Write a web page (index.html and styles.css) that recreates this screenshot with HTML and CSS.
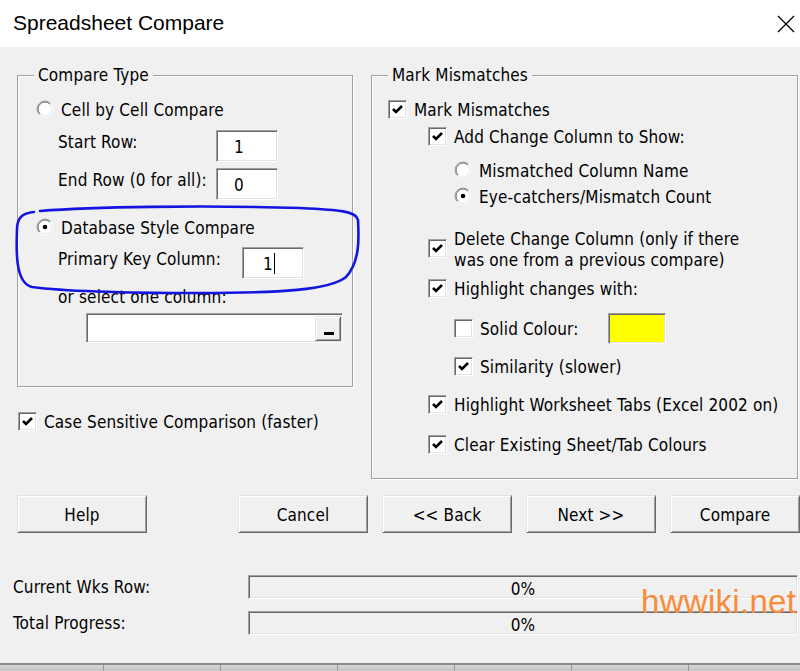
FILE: index.html
```html
<!DOCTYPE html>
<html>
<head>
<meta charset="utf-8">
<link rel="stylesheet" href="styles.css">
</head>
<body>
<div class="window">
  <div class="titlebar">
    <span class="title">Spreadsheet Compare</span>
    <svg class="close" viewBox="0 0 18 18"><path d="M1 1L17 17M17 1L1 17"/></svg>
  </div>

  <div class="top">
    <div class="leftcol">
      <div class="group gl">
        <span class="legend">Compare Type</span>
        <div class="row l-r1">
          <svg class="radio" viewBox="0 0 18 18"><circle cx="9" cy="9" r="8" fill="#fff"/><path d="M3.34 14.66A8 8 0 0 1 14.66 3.34" class="o1"/><path d="M14.66 3.34A8 8 0 0 1 3.34 14.66" class="o2"/><path d="M4.05 13.95A7 7 0 0 1 13.95 4.05" class="i1"/><path d="M13.95 4.05A7 7 0 0 1 4.05 13.95" class="i2"/></svg>
          <span>Cell by Cell Compare</span>
        </div>
        <div class="frow l-r2"><span class="flabel w158">Start Row:</span><span class="tbox sunken">1</span></div>
        <div class="frow l-r3"><span class="flabel w158">End Row (0 for all):</span><span class="tbox sunken">0</span></div>
        <div class="row l-r4">
          <svg class="radio" viewBox="0 0 18 18"><circle cx="9" cy="9" r="8" fill="#fff"/><path d="M3.34 14.66A8 8 0 0 1 14.66 3.34" class="o1"/><path d="M14.66 3.34A8 8 0 0 1 3.34 14.66" class="o2"/><path d="M4.05 13.95A7 7 0 0 1 13.95 4.05" class="i1"/><path d="M13.95 4.05A7 7 0 0 1 4.05 13.95" class="i2"/><circle cx="9" cy="9" r="2.3" fill="#000"/></svg>
          <span>Database Style Compare</span>
        </div>
        <div class="frow l-r5"><span class="flabel w184">Primary Key Column:</span><span class="tbox sunken pk">1<span class="caret"></span></span></div>
        <div class="plain l-r6">or select one column:</div>
        <div class="combo sunken l-r7"><span class="cbtn"><span class="dash"></span></span></div>
      </div>
      <div class="row case">
        <span class="cb sunken"><svg viewBox="0 0 15 15"><path d="M3 7L6 10L12 4"/></svg></span>
        <span>Case Sensitive Comparison (faster)</span>
      </div>
    </div>

    <div class="group gr">
      <span class="legend">Mark Mismatches</span>
      <div class="row r1 in0">
        <span class="cb sunken"><svg viewBox="0 0 15 15"><path d="M3 7L6 10L12 4"/></svg></span>
        <span>Mark Mismatches</span>
      </div>
      <div class="row r2 in1">
        <span class="cb sunken"><svg viewBox="0 0 15 15"><path d="M3 7L6 10L12 4"/></svg></span>
        <span>Add Change Column to Show:</span>
      </div>
      <div class="row r3 in2">
        <svg class="radio" viewBox="0 0 18 18"><circle cx="9" cy="9" r="8" fill="#fff"/><path d="M3.34 14.66A8 8 0 0 1 14.66 3.34" class="o1"/><path d="M14.66 3.34A8 8 0 0 1 3.34 14.66" class="o2"/><path d="M4.05 13.95A7 7 0 0 1 13.95 4.05" class="i1"/><path d="M13.95 4.05A7 7 0 0 1 4.05 13.95" class="i2"/></svg>
        <span>Mismatched Column Name</span>
      </div>
      <div class="row r4 in2">
        <svg class="radio" viewBox="0 0 18 18"><circle cx="9" cy="9" r="8" fill="#fff"/><path d="M3.34 14.66A8 8 0 0 1 14.66 3.34" class="o1"/><path d="M14.66 3.34A8 8 0 0 1 3.34 14.66" class="o2"/><path d="M4.05 13.95A7 7 0 0 1 13.95 4.05" class="i1"/><path d="M13.95 4.05A7 7 0 0 1 4.05 13.95" class="i2"/><circle cx="9" cy="9" r="2.3" fill="#000"/></svg>
        <span>Eye-catchers/Mismatch Count</span>
      </div>
      <div class="row r5 in1">
        <span class="cb sunken"><svg viewBox="0 0 15 15"><path d="M3 7L6 10L12 4"/></svg></span>
        <span class="two">Delete Change Column (only if there<br>was one from a previous compare)</span>
      </div>
      <div class="row r6 in1">
        <span class="cb sunken"><svg viewBox="0 0 15 15"><path d="M3 7L6 10L12 4"/></svg></span>
        <span>Highlight changes with:</span>
      </div>
      <div class="row r7 in2">
        <span class="cb sunken"></span>
        <span class="solid">Solid Colour:</span>
        <span class="swatch sunken"></span>
      </div>
      <div class="row r8 in2">
        <span class="cb sunken"><svg viewBox="0 0 15 15"><path d="M3 7L6 10L12 4"/></svg></span>
        <span>Similarity (slower)</span>
      </div>
      <div class="row r9 in1">
        <span class="cb sunken"><svg viewBox="0 0 15 15"><path d="M3 7L6 10L12 4"/></svg></span>
        <span>Highlight Worksheet Tabs (Excel 2002 on)</span>
      </div>
      <div class="row r10 in1">
        <span class="cb sunken"><svg viewBox="0 0 15 15"><path d="M3 7L6 10L12 4"/></svg></span>
        <span>Clear Existing Sheet/Tab Colours</span>
      </div>
    </div>
  </div>

  <div class="buttons">
    <div class="btn">Help</div>
    <div class="btn cancel">Cancel</div>
    <div class="btn">&lt;&lt; Back</div>
    <div class="btn">Next &gt;&gt;</div>
    <div class="btn">Compare</div>
  </div>

  <div class="progress">
    <div class="prow"><span class="plabel">Current Wks Row:</span><div class="pbar">0%</div></div>
    <div class="prow second"><span class="plabel">Total Progress:</span><div class="pbar">0%</div></div>
  </div>

  <div class="strip">
    <span class="cell c0"></span><span class="cell"></span><span class="cell"></span><span class="cell"></span><span class="cell"></span><span class="cell"></span><span class="cell last"></span>
  </div>

  <svg class="annot" viewBox="0 0 800 671"><path d="M40 211C90 207 200 205 300 208C340 210 356 211 358 220C359 238 360 262 346 277C330 290 280 293 200 293C130 293 70 292 32 287C16 283 16 255 17 230C17 218 22 213 34 212"/></svg>
  <div class="watermark">hwwiki.net</div>
</div>
</body>
</html>
```

FILE: styles.css
```css
* { box-sizing: border-box; }
html, body { margin: 0; padding: 0; }
body {
  width: 800px;
  height: 671px;
  overflow: hidden;
  background: #f0f0f0;
  font-family: "DejaVu Sans Condensed", "Liberation Sans", Arial, sans-serif;
  font-stretch: condensed;
  font-size: 17px;
  letter-spacing: 0.15px;
  line-height: 20px;
  color: #000;
}
.window {
  position: relative;
  width: 800px;
  height: 671px;
  display: flex;
  flex-direction: column;
}
.titlebar {
  height: 47px;
  background: #fff;
  display: flex;
  align-items: center;
  justify-content: space-between;
  padding: 0 5px 1px 13px;
  flex: none;
}
.title { font-family: "Liberation Sans", Arial, sans-serif; font-stretch: normal; letter-spacing: 0; font-size: 21px; color: #000; }
.close { width: 18px; height: 18px; margin-top: 1px; }
.close path { stroke: #000; stroke-width: 1.3; fill: none; }

.top {
  display: flex;
  margin-top: 28px;
  padding-left: 17px;
  align-items: flex-start;
}
.leftcol { width: 337px; flex: none; }
.group {
  position: relative;
  border: 1px solid #a0a0a0;
  box-shadow: inset 1px 1px 0 #fff, 1px 1px 0 #fff;
}
.gl { height: 312px; width: 336px; padding-left: 18px; }
.gr { height: 404px; width: 427px; margin-left: 17px; padding-left: 16px; }
.legend {
  position: absolute;
  top: -11px;
  left: 16px;
  padding: 0 4px;
  background: #f0f0f0;
  line-height: 20px;
}
.row { display: flex; align-items: center; height: 20px; }
.row > span + span, .row > svg + span { margin-left: 7px; }
.radio { width: 18px; height: 18px; flex: none; }
.radio path { fill: none; stroke-width: 1; }
.radio .o1 { stroke: #a0a0a0; }
.radio .o2 { stroke: #ffffff; }
.radio .i1 { stroke: #696969; }
.radio .i2 { stroke: #e3e3e3; }

.sunken {
  border-style: solid;
  border-width: 1px;
  border-color: #a0a0a0 #fff #fff #a0a0a0;
  box-shadow: inset 1px 1px 0 #696969, inset -1px -1px 0 #e3e3e3;
  background: #fff;
}
.cb {
  width: 19px; height: 19px; flex: none;
  display: flex; align-items: center; justify-content: center;
  padding: 1px;
}
.cb svg { width: 15px; height: 15px; }
.cb path { fill: none; stroke: #000; stroke-width: 2.6; stroke-linejoin: miter; stroke-linecap: butt; }
.row > .cb + span { margin-left: 7px; }

.l-r1 { margin-top: 23px; }
.frow { display: flex; align-items: flex-start; height: 32px; padding-left: 22px; }
.flabel { padding-top: 2px; flex: none; }
.w158 { width: 158px; }
.w184 { width: 184px; }
.tbox {
  width: 62px; height: 32px;
  padding-left: 17px;
  padding-top: 1px;
  display: flex; align-items: center;
}
.pk { padding-left: 20px; }
.caret { display: inline-block; width: 1px; height: 21px; background: #000; margin-left: 1px; }
.l-r2 { margin-top: 11px; }
.l-r3 { margin-top: 6px; }
.l-r4 { margin-top: 17px; }
.l-r5 { margin-top: 10px; }
.plain { padding-left: 22px; height: 20px; }
.l-r6 { margin-top: 8px; }
.combo {
  margin-top: 6px;
  margin-left: 50px;
  width: 257px; height: 30px;
  padding: 2px 1px 1px 2px;
  display: flex; justify-content: flex-end;
}
.cbtn {
  width: 26px; height: 100%;
  background: #f0f0f0;
  border-style: solid; border-width: 1px;
  border-color: #e3e3e3 #696969 #696969 #e3e3e3;
  box-shadow: inset 1px 1px 0 #fff, inset -1px -1px 0 #a0a0a0;
  display: flex; align-items: flex-end; justify-content: center;
  padding-bottom: 5px;
}
.dash { width: 10px; height: 3px; background: #000; margin-left: 1px; }
.case { margin-top: 24px; padding-left: 1px; }

.row > span, .two { padding-top: 1px; }
.r1 { margin-top: 23px; }
.r2 { margin-top: 7px; }
.r3 { margin-top: 14px; }
.r4 { margin-top: 6px; }
.r5 { margin-top: 21px; height: 42px; }
.r5 .two { line-height: 21px; margin-top: 2px; }
.r6 { margin-top: 9px; }
.r7 { margin-top: 14px; height: 32px; }
.r8 { margin-top: 12px; }
.r9 { margin-top: 18px; }
.r10 { margin-top: 20px; }
.in0 { padding-left: 0; }
.in1 { padding-left: 40px; }
.in2 { padding-left: 66px; }
.row > .cb { padding-top: 1px; }
.solid { width: 128px; flex: none; }
.row > .swatch { margin-left: 0; width: 58px; height: 31px; background: #ffff00; flex: none; }

.buttons {
  display: flex;
  margin-top: 16px;
  padding-left: 17px;
  gap: 14px;
}
.btn {
  width: 130px; height: 38px; flex: none;
  background: #f0f0f0;
  border-style: solid; border-width: 1px;
  border-color: #e3e3e3 #696969 #696969 #e3e3e3;
  box-shadow: inset 1px 1px 0 #fff, inset -1px -1px 0 #a0a0a0;
  display: flex; align-items: center; justify-content: center;
  padding-top: 2px;
}
.cancel { margin-left: 77px; }

.progress { margin-top: 42px; padding-left: 13px; }
.prow { display: flex; align-items: center; height: 24px; }
.prow.second { margin-top: 12px; }
.plabel { width: 235px; flex: none; }
.pbar {
  width: 550px; height: 24px;
  border-style: solid; border-width: 1px;
  border-color: #a0a0a0 #fff #fff #a0a0a0;
  box-shadow: inset 1px 1px 0 #696969, inset -1px -1px 0 #e3e3e3;
  background: #f0f0f0;
  display: flex; align-items: center; justify-content: center;
  padding-top: 3px;
}

.strip {
  margin-top: auto;
  height: 8px;
  border-top: 2px solid #8a8a8a;
  background: linear-gradient(#d6d6d6, #c4c4c4);
  display: flex;
  flex: none;
}
.cell { width: 117px; height: 100%; border-right: 1px solid #9a9a9a; flex: none; }
.cell.c0 { width: 104px; }
.cell.last { border-right: none; flex: 1; }

.annot {
  position: absolute;
  left: 0; top: 0;
  width: 800px; height: 671px;
  pointer-events: none;
}
.annot path { fill: none; stroke: #1414e0; stroke-width: 2.6; stroke-linecap: round; }

.watermark {
  position: absolute;
  left: 641px;
  top: 585px;
  font-size: 33px;
  line-height: 33px;
  letter-spacing: 0.3px;
  color: #f98b3c;
  font-family: "Liberation Sans", Arial, sans-serif;
  font-stretch: normal;
}
```
